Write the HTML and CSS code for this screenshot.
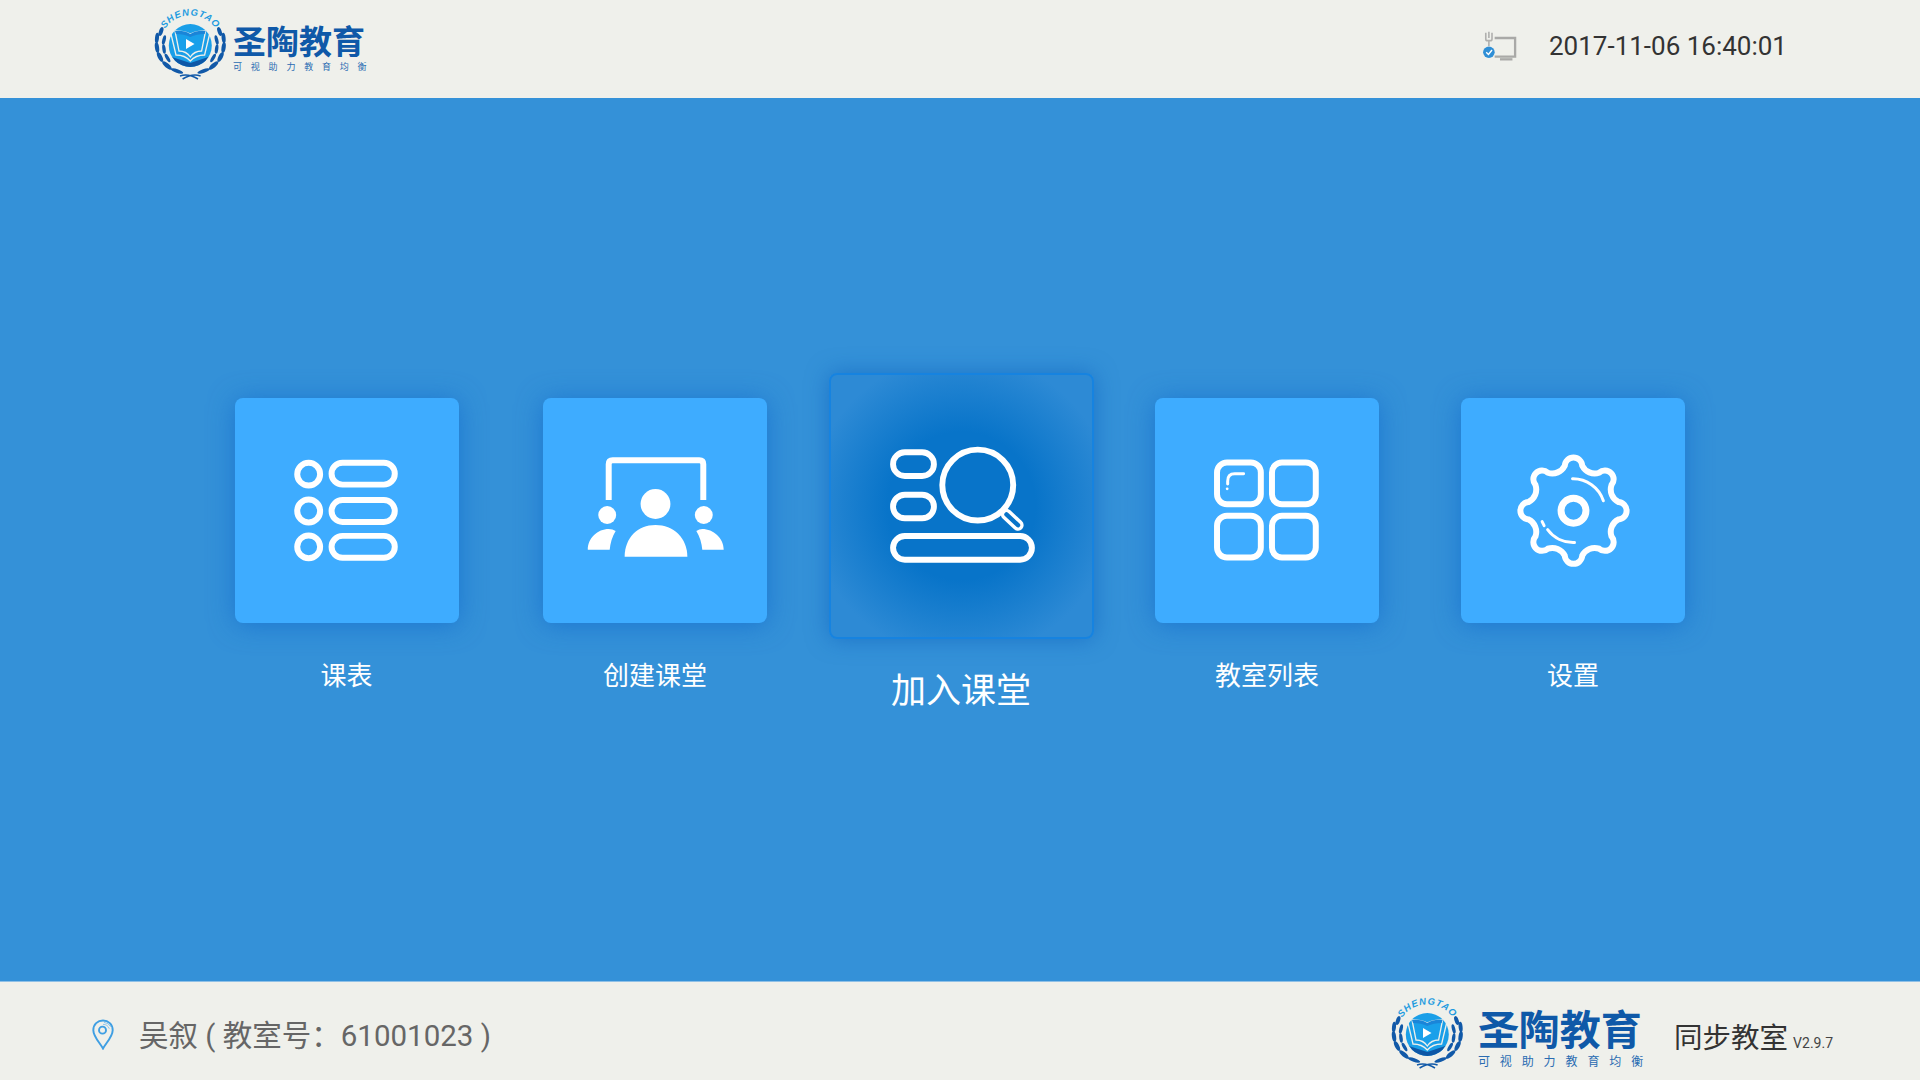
FILE: index.html
```html
<!DOCTYPE html>
<html lang="zh-CN">
<head>
  <meta charset="UTF-8">
  <title>同步教室</title>
  <link rel="stylesheet" href="styles.css">
</head>
<body>
  <svg class="defs" width="0" height="0">
    <defs>
      <clipPath id="disc"><circle cx="44.300" cy="44.500" r="21.500"/></clipPath>
      <path id="arc" d="M18 29A31 31 0 0 1 70.600 29"/>
      <g id="laurel">
        <ellipse cx="15" cy="30.500" rx="2" ry="4.600" transform="rotate(20 15 30.500)"/>
        <ellipse cx="11" cy="37" rx="2" ry="5.200" transform="rotate(6 11 37)"/>
        <ellipse cx="18" cy="39" rx="1.700" ry="4.800" transform="rotate(14 18 39)"/>
        <ellipse cx="11" cy="46.500" rx="2.100" ry="5.400" transform="rotate(-8 11 46.500)"/>
        <ellipse cx="18" cy="48" rx="1.700" ry="4.800" transform="rotate(-8 18 48)"/>
        <ellipse cx="14" cy="56" rx="2.200" ry="5.500" transform="rotate(-28 14 56)"/>
        <ellipse cx="21.500" cy="57" rx="1.700" ry="4.800" transform="rotate(-30 21.500 57)"/>
        <ellipse cx="21" cy="64.500" rx="2.200" ry="6" transform="rotate(-50 21 64.500)"/>
        <ellipse cx="31" cy="70" rx="1.900" ry="6.500" transform="rotate(-72 31 70)"/>
      </g>
      <g id="emblem">
        <circle cx="44.300" cy="44.500" r="21.500" fill="#1a9fe8"/>
        <g clip-path="url(#disc)">
          <path d="M20 54L44.300 62L68 54V68H20Z" fill="#0d57a6"/>
        </g>
        <path d="M25 33L30 54Q39 54 44.300 60Q49.500 54 58.600 54L63.600 33" fill="none" stroke="#eff0eb" stroke-width="1.300"/>
        <path d="M29 30Q38 30 44.300 33Q50.600 30 59.600 30L55.600 50Q48.300 50 44.300 56Q40.300 50 33 50Z" fill="#19a0ea" stroke="#eff0eb" stroke-width="1.300"/>
        <path d="M29 30Q38 29 44.300 33Q50.600 29 59.600 30L58.600 33Q50.600 33 44.300 36Q38 33 30 33Z" fill="#1a85d8"/>
        <path d="M40 38L40 48L48.500 43Z" fill="#fff"/>
        <use href="#laurel" fill="#1159a8"/>
        <use href="#laurel" fill="#1159a8" transform="matrix(-1 0 0 1 88.600 0)"/>
        <path d="M34 75Q42 72 52 78M54.600 75Q46.600 72 36.600 78" fill="none" stroke="#1159a8" stroke-width="1.500"/>
      </g>
    </defs>
  </svg>

  <header class="top-bar">
    <div class="logo">
      <svg class="logo-mark" viewBox="5 3 80 77">
        <text class="emblem-name"><textPath href="#arc" startOffset="50%" text-anchor="middle">SHENGTAO</textPath></text>
        <use href="#emblem"/>
      </svg>
      <div class="logo-text">
        <div class="logo-title">圣陶教育</div>
        <div class="logo-sub">可视助力教育均衡</div>
      </div>
    </div>
    <div class="status">
      <svg class="net-icon" viewBox="0 0 40 36">
        <path d="M14 9H37V30H14" fill="none" stroke="#a9a9a7" stroke-width="2.600"/>
        <path d="M20 33H34" stroke="#a9a9a7" stroke-width="2.600"/>
        <path d="M4 3V10Q4 12 6 12H9Q11 12 11 10V3M7.500 2V9M7.500 12V18" fill="none" stroke="#b0b0ae" stroke-width="1.800"/>
        <circle cx="7.500" cy="25" r="6.500" fill="#2f8fd6"/>
        <path d="M4.500 25L7 27.500L11 22.500" fill="none" stroke="#fff" stroke-width="1.600"/>
      </svg>
      <span class="clock">2017-11-06 16:40:01</span>
    </div>
  </header>

  <main class="menu">
    <div class="menu-item">
      <div class="card">
        <svg viewBox="0 0 225 225" class="icon">
          <circle cx="74" cy="76" r="11.500"/>
          <circle cx="74" cy="113" r="11.500"/>
          <circle cx="74" cy="149" r="11.500"/>
          <rect x="97" y="64.500" width="63.500" height="22" rx="11"/>
          <rect x="97" y="102" width="63.500" height="22" rx="11"/>
          <rect x="97" y="138" width="63.500" height="22" rx="11"/>
        </svg>
      </div>
      <div class="label">课表</div>
    </div>

    <div class="menu-item">
      <div class="card">
        <svg viewBox="0 0 225 225" class="icon">
          <path d="M66 102V66Q66 62 70 62H157Q161 62 161 66V102"/>
          <g class="solid">
            <circle cx="113" cy="106" r="15"/>
            <path d="M82 159C82 140 95 127 113 127C131 127 145 140 145 159Z"/>
            <circle cx="64.500" cy="117" r="9"/>
            <circle cx="161.500" cy="117" r="9"/>
            <path d="M45 152C45 140 55 131 66 131Q70 131 73 133Q68 141 67 152Z"/>
            <path d="M181.500 152C181.500 140 171 131 160 131Q157 131 154 133Q159 141 160 152Z"/>
          </g>
        </svg>
      </div>
      <div class="label">创建课堂</div>
    </div>

    <div class="menu-item active">
      <div class="card">
        <svg viewBox="0 0 265 265" class="icon">
          <rect x="63" y="78" width="41.500" height="24" rx="12"/>
          <rect x="63" y="121" width="41.500" height="24" rx="12"/>
          <rect x="63" y="163" width="141" height="24" rx="12"/>
          <circle cx="149" cy="111.300" r="36"/>
          <rect class="thin" x="-12" y="-4" width="24" height="8" rx="4" transform="translate(184 146.500) rotate(43)"/>
        </svg>
      </div>
      <div class="label">加入课堂</div>
    </div>

    <div class="menu-item">
      <div class="card">
        <svg viewBox="0 0 225 225" class="icon">
          <rect x="62.300" y="64.300" width="44" height="42" rx="10"/>
          <rect x="117.500" y="64.300" width="44" height="42" rx="10"/>
          <rect x="62.300" y="117.700" width="44" height="42" rx="10"/>
          <rect x="117.500" y="117.700" width="44" height="42" rx="10"/>
          <path class="hair" d="M89 75.500H80Q73 75.500 73 83V86"/>
          <circle class="dot" cx="72.500" cy="90.700" r="1.400"/>
        </svg>
      </div>
      <div class="label">教室列表</div>
    </div>

    <div class="menu-item">
      <div class="card">
        <svg viewBox="0 0 225 225" class="icon">
          <g transform="translate(113 112.700)">
            <path d="M-8.780 -45.150A8.800 8.800 0 0 1 8.780 -45.150A14 14 0 0 0 25.720 -38.140A8.800 8.800 0 0 1 38.140 -25.720A14 14 0 0 0 45.150 -8.780A8.800 8.800 0 0 1 45.150 8.780A14 14 0 0 0 38.140 25.720A8.800 8.800 0 0 1 25.720 38.140A14 14 0 0 0 8.780 45.150A8.800 8.800 0 0 1 -8.780 45.150A14 14 0 0 0 -25.720 38.140A8.800 8.800 0 0 1 -38.140 25.720A14 14 0 0 0 -45.150 8.780A8.800 8.800 0 0 1 -45.150 -8.780A14 14 0 0 0 -38.140 -25.720A8.800 8.800 0 0 1 -25.720 -38.140A14 14 0 0 0 -8.780 -45.150Z"/>
            <circle r="12.500" stroke-width="7"/>
            <path class="hair" d="M-1 -32A32 32 0 0 1 30 -10"/>
            <path class="hair" d="M1 32A32 32 0 0 1 -26 19"/>
            <path class="hair" d="M-31.500 11L-29.500 15"/>
          </g>
        </svg>
      </div>
      <div class="label">设置</div>
    </div>
  </main>

  <footer class="bottom-bar">
    <div class="room">
      <svg class="pin" viewBox="0 0 24 32">
        <path d="M12 30.500C9 25 2 18 2 11.500C2 5.500 6.500 1.500 12 1.500C17.500 1.500 22 5.500 22 11.500C22 18 15 25 12 30.500Z" fill="none" stroke="#3f9fe3" stroke-width="2"/>
        <circle cx="11.500" cy="11.500" r="3.600" fill="none" stroke="#3f9fe3" stroke-width="2"/>
        <path d="M12 5.500A7 7 0 0 1 18.500 10M13 3.500A9 9 0 0 1 20 8" fill="none" stroke="#8cc4ec" stroke-width="1"/>
      </svg>
      <span class="room-name">吴叙 ( 教室号<span class="colon">：</span>61001023 )</span>
    </div>
    <div class="brand">
      <svg class="brand-mark" viewBox="5 3 80 77">
        <text class="emblem-name"><textPath href="#arc" startOffset="50%" text-anchor="middle">SHENGTAO</textPath></text>
        <use href="#emblem"/>
      </svg>
      <div class="brand-text">
        <div class="brand-title">圣陶教育</div>
        <div class="brand-sub">可视助力教育均衡</div>
      </div>
      <div class="product">同步教室<span class="version">V2.9.7</span></div>
    </div>
  </footer>
</body>
</html>
```

FILE: styles.css
```css
body {
  margin: 0;
  height: 100vh;
  display: flex;
  flex-direction: column;
  overflow: hidden;
  background-color: #3491d8;
  font-family: Roboto, "Noto Sans CJK SC", sans-serif;
}
.defs {
  position: absolute;
}
.emblem-name {
  font-family: "Liberation Sans", sans-serif;
  font-size: 9.500px;
  font-weight: bold;
  font-style: italic;
  letter-spacing: 0.800px;
  fill: #1d9be0;
}

/* top bar */
.top-bar {
  height: 98px;
  box-sizing: border-box;
  padding: 4px 133px 0 151px;
  display: flex;
  justify-content: space-between;
  align-items: flex-start;
  background-color: #eff0eb;
}
.logo {
  display: flex;
  gap: 2px;
}
.logo-mark {
  width: 80px;
  height: 77px;
}
.logo-text {
  padding-top: 21px;
}
.logo-title {
  font-size: 33px;
  line-height: 36px;
  font-weight: 700;
  color: #0f59a8;
  white-space: nowrap;
}
.logo-sub {
  font-size: 9px;
  line-height: 12px;
  letter-spacing: 8.800px;
  color: #2a6cb2;
  white-space: nowrap;
}
.status {
  display: flex;
  align-items: center;
  gap: 31px;
  padding-top: 23px;
}
.net-icon {
  width: 36px;
  height: 32px;
}
.clock {
  font-size: 26px;
  line-height: 38px;
  color: #333;
  white-space: nowrap;
}

/* menu cards */
.menu {
  flex: 1;
  display: flex;
  justify-content: center;
  align-items: flex-start;
  gap: 82px;
  padding: 300px 0 0 2px;
}
.menu-item {
  width: 224px;
  display: flex;
  flex-direction: column;
  align-items: center;
}
.menu-item:first-child {
  margin: 0 2.500px 0 -2.500px;
}
.card {
  width: 224px;
  height: 225px;
  border-radius: 8px;
  background-color: #3eacff;
  box-shadow: 0 2px 26px rgba(20, 110, 205, 0.75);
}
.icon {
  display: block;
  width: 100%;
  height: 100%;
  fill: none;
  stroke: #fff;
  stroke-width: 6;
}
.icon .solid {
  fill: #fff;
  stroke: none;
}
.icon .hair {
  stroke-width: 3;
  stroke-linecap: round;
}
.icon .thin {
  stroke-width: 3.500;
}
.icon .dot {
  fill: #fff;
  stroke: none;
}
.label {
  margin-top: 35px;
  font-size: 26px;
  line-height: 36px;
  color: #fff;
  white-space: nowrap;
}
.menu-item.active .card {
  flex: none;
  width: 265px;
  height: 266px;
  box-sizing: border-box;
  margin: -25px -20px 0;
  border: 2px solid #1683e0;
  background: radial-gradient(circle at center, #0874c9 40%, #2d8ad5 82%);
  box-shadow: 0 0 22px rgba(15, 100, 190, 0.65);
}
.menu-item.active .label {
  margin-top: 29px;
  font-size: 35px;
  line-height: 48px;
}

/* bottom bar */
.bottom-bar {
  height: 99px;
  box-sizing: border-box;
  padding: 0 87px 0 91px;
  display: flex;
  justify-content: space-between;
  align-items: center;
  border-top: 1px solid #8fc0e6;
  background-color: #eff0eb;
}
.room {
  display: flex;
  align-items: center;
  gap: 24px;
  padding-top: 7px;
}
.pin {
  width: 24px;
  height: 31px;
}
.room-name {
  font-size: 29.500px;
  line-height: 42px;
  color: #666;
  white-space: nowrap;
}
.colon {
  font-family: "Noto Sans CJK TC", sans-serif;
}
.brand {
  display: flex;
  align-items: center;
}
.brand-mark {
  width: 80px;
  height: 77px;
}
.brand-text {
  margin-left: 10px;
  padding-top: 18px;
}
.brand-title {
  font-size: 41px;
  line-height: 44px;
  font-weight: 700;
  color: #0f59a8;
  white-space: nowrap;
}
.brand-sub {
  font-size: 12px;
  line-height: 18px;
  letter-spacing: 9.900px;
  color: #2a6cb2;
  white-space: nowrap;
}
.product {
  margin-left: 21px;
  padding-top: 8px;
  font-size: 28.500px;
  color: #333;
  white-space: nowrap;
}
.version {
  margin-left: 5px;
  font-size: 14px;
  color: #444;
}
```
